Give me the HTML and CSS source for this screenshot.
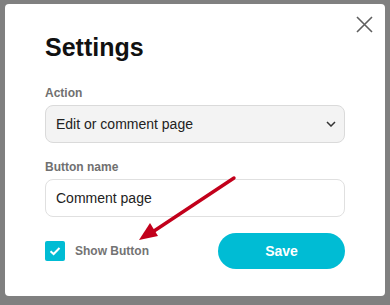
FILE: index.html
```html
<!DOCTYPE html>
<html lang="en">
<head>
    <meta charset="UTF-8">
    <meta name="viewport" content="width=device-width, initial-scale=1.0">
    <title>Settings</title>
    <link rel="stylesheet" href="styles.css">
</head>
<body>
    <div class="modal">
        <button class="close" aria-label="Close">
            <svg width="17" height="17" viewBox="0 0 17 17">
                <path d="M1 1 L16 16 M16 1 L1 16" stroke="#5f5f5f" stroke-width="1.6" fill="none"/>
            </svg>
        </button>

        <h1>Settings</h1>

        <label class="field-label" for="action">Action</label>
        <select id="action" class="field select">
            <option>Edit or comment page</option>
        </select>

        <label class="field-label label-gap" for="bname">Button name</label>
        <input id="bname" class="field input" type="text" value="Comment page">

        <div class="footer">
            <label class="check">
                <span class="box">
                    <svg width="12" height="10" viewBox="0 0 12 10">
                        <path d="M1.5 5.2 L4.6 8 L10.5 2" stroke="#fff" stroke-width="2" fill="none"/>
                    </svg>
                </span>
                Show Button
            </label>
            <button class="save">Save</button>
        </div>
    </div>

    <!-- pointer arrow over the modal -->
    <svg class="arrow" width="390" height="305" viewBox="0 0 390 305">
        <path d="M234 178 L151 233" stroke="#c2001b" stroke-width="3.4" stroke-linecap="round" fill="none"/>
        <polygon points="139,240 158,236 150,223" fill="#c2001b"/>
    </svg>
</body>
</html>
```

FILE: styles.css
```css
body {
    margin: 0;
    height: 305px;
    background: #808080;
    font-family: "Liberation Sans", Arial, sans-serif;
    overflow: hidden;
}
.modal {
    position: relative;
    box-sizing: border-box;
    width: 380px;
    height: 292px;
    margin: 4px 5px;
    padding: 28px 40px 0;
    background: #fff;
    border-radius: 4px;
    display: flex;
    flex-direction: column;
}
.close {
    position: absolute;
    top: 12px;
    right: 12px;
    padding: 0;
    border: 0;
    background: none;
    line-height: 0;
}
h1 {
    margin: 0 0 23px;
    font-size: 25px;
    line-height: 30px;
    font-weight: bold;
    color: #111;
}
.field-label {
    font-size: 12px;
    line-height: 16px;
    font-weight: bold;
    color: #707070;
    margin-bottom: 4px;
}
.label-gap {
    margin-top: 16px;
}
.field {
    box-sizing: border-box;
    width: 300px;
    height: 38px;
    padding: 0 10px;
    border: 1px solid #dadada;
    border-radius: 8px;
    font-family: "Liberation Sans", Arial, sans-serif;
    font-size: 14px;
    color: #222;
}
.select {
    appearance: none;
    -webkit-appearance: none;
    background: #f3f3f3 url("data:image/svg+xml,%3Csvg xmlns='http://www.w3.org/2000/svg' width='10' height='6' viewBox='0 0 10 6'%3E%3Cpath d='M1 1 L5 5 L9 1' stroke='%23333' stroke-width='1.5' fill='none'/%3E%3C/svg%3E") no-repeat right 8px center;
}
.input {
    background: #fff;
    border-color: #e0e0e0;
    outline: none;
}
.footer {
    display: flex;
    align-items: center;
    margin-top: 16px;
}
.check {
    display: flex;
    align-items: center;
    gap: 10px;
    font-size: 12px;
    font-weight: bold;
    color: #737373;
}
.box {
    width: 20px;
    height: 20px;
    border-radius: 2px;
    background: #00bcd4;
    display: flex;
    align-items: center;
    justify-content: center;
}
.save {
    margin-left: auto;
    width: 127px;
    height: 36px;
    border: 0;
    border-radius: 18px;
    background: #00bcd4;
    color: #fff;
    font-family: "Liberation Sans", Arial, sans-serif;
    font-size: 14px;
    font-weight: bold;
}
.arrow {
    position: absolute;
    left: 0;
    top: 0;
    pointer-events: none;
}
```
